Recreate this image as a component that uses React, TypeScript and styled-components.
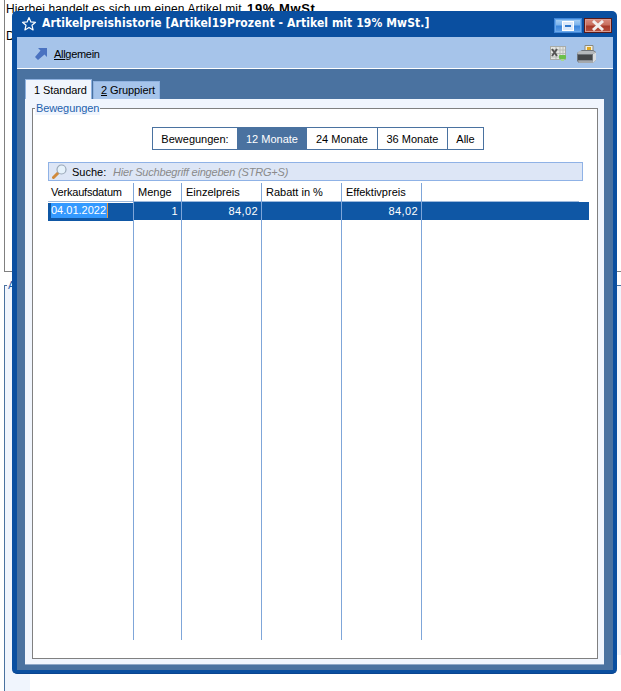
import React from "react";
import styled, { createGlobalStyle } from "styled-components";

const GlobalStyle = createGlobalStyle`
  html, body {
    margin: 0;
    padding: 0;
    background: #fff;
    font-family: "Liberation Sans", Arial, sans-serif;
  }
`;

const Page = styled.div`
  position: relative;
  width: 621px;
  height: 691px;
  overflow: hidden;
  background: #fff;
  display: flex;
  flex-direction: column;
`;

const BackTop = styled.div`
  height: 272px;
  flex: none;
  box-sizing: border-box;
  margin-left: 4px;
  padding: 2px 0 0 1px;
  border-left: 1px solid #808080;
  border-bottom: 1px solid #808080;
  font-size: 12px;
  line-height: 13px;
  letter-spacing: 0.14px;
  color: #000;
`;

const BackLine = styled.div`
  height: 13px;
  margin-bottom: 15px;
  white-space: nowrap;

  b {
    margin-left: 2px;
    font-size: 13px;
    letter-spacing: 0.6px;
  }
`;

const BackBottom = styled.div`
  flex: 1;
  margin-top: 7px;
  margin-left: 4px;
  display: flex;
  flex-direction: column;
`;

const BackFieldset = styled.fieldset`
  height: 376px;
  flex: none;
  box-sizing: border-box;
  margin: 0;
  padding: 0;
  border: none;
  border-top: 1px solid #4a72a0;
  border-left: 1px solid #4a72a0;
  background: #f0f5fd;
`;

const BackLegend = styled.legend`
  margin-left: 2px;
  padding: 0 1px;
  font-size: 11px;
  line-height: 12px;
  color: #1f62ad;
`;

const BackStrip = styled.div`
  flex: 1;
  width: 25px;
  border-left: 1px solid #4a72a0;
  background: #f0f5fd;
`;

const Window = styled.div`
  position: absolute;
  left: 12px;
  top: 11px;
  width: 605px;
  height: 663px;
  box-sizing: border-box;
  padding: 0 4px 3px 5px;
  background: #0a4fa0;
  border-radius: 5px;
  border-bottom: 1px solid #0a4590;
  display: flex;
  flex-direction: column;
  font-family: "Liberation Sans", Arial, sans-serif;
  font-size: 11px;
  color: #000;
`;

const TitleBar = styled.div`
  height: 26px;
  flex: none;
  display: flex;
  align-items: center;
  padding-left: 4px;
`;

const Title = styled.div`
  margin: -2px 0 0 5px;
  color: #fff;
  font-family: "DejaVu Sans Condensed", "DejaVu Sans", sans-serif;
  font-stretch: condensed;
  font-weight: bold;
  font-size: 12px;
  letter-spacing: 0.1px;
  white-space: nowrap;
  flex: 1;
`;

const WindowButton = styled.div<{ $close?: boolean }>`
  width: 28px;
  height: 15px;
  box-sizing: border-box;
  margin-top: 3px;
  margin-right: ${(props) => (props.$close ? "1px" : "2px")};
  display: flex;
  align-items: center;
  justify-content: center;
  border: 1px solid ${(props) => (props.$close ? "#5a1a18" : "#3f86d8")};
  box-shadow: inset 0 0 0 1px ${(props) => (props.$close ? "#d89a90" : "#6aa8ea")};
  background: ${(props) =>
    props.$close
      ? "linear-gradient(#d98a7e 0%, #c8705f 45%, #a83a2a 55%, #b5503e 100%)"
      : "linear-gradient(#a8d0f5 0%, #7db4ec 45%, #3a86dc 55%, #60a0e8 100%)"};
`;

const Toolbar = styled.div`
  height: 32px;
  flex: none;
  box-sizing: border-box;
  display: flex;
  align-items: center;
  padding: 2px 16px 0 18px;
  background: #a6c4ea;
  border-bottom: 1px solid #fff;
`;

const ToolLabel = styled.span`
  margin-left: 7px;
  flex: 1;
  letter-spacing: -0.3px;
`;

const ToolIcons = styled.div`
  display: flex;
  align-items: center;
  gap: 10px;
`;

const Body = styled.div`
  flex: 1;
  min-height: 0;
  display: flex;
  flex-direction: column;
  padding: 10px 9px 5px 8px;
  background: #4a72a0;
`;

const Tabs = styled.div`
  height: 20px;
  flex: none;
  display: flex;
  align-items: flex-end;
  gap: 1px;
`;

const Tab = styled.div<{ $active?: boolean }>`
  box-sizing: border-box;
  width: 67px;
  height: ${(props) => (props.$active ? "20px" : "18px")};
  padding-left: ${(props) => (props.$active ? "8px" : "7px")};
  line-height: ${(props) => (props.$active ? "20px" : "17px")};
  letter-spacing: -0.1px;
  background: ${(props) => (props.$active ? "#f0f5fd" : "#a6c4ea")};
  border: 1px solid #8fb2e0;
  border-bottom: none;
  white-space: nowrap;
`;

const Panel = styled.div`
  flex: 1;
  min-height: 0;
  box-sizing: border-box;
  display: flex;
  padding: 3px 6px 5px 7px;
  background: #f0f5fd;
  border-bottom: 1px solid #8fa8c8;
`;

const Fieldset = styled.fieldset`
  flex: 1;
  min-width: 0;
  margin: 0;
  padding: 0;
  border: 1px solid #808080;
  background: #fff;
`;

const Legend = styled.legend`
  margin-left: 2px;
  padding: 0 1px;
  color: #1f62ad;
  background: #f0f5fd;
  line-height: 13px;
  letter-spacing: -0.1px;
`;

const Segments = styled.div`
  width: 332px;
  height: 23px;
  box-sizing: border-box;
  margin: 12px 0 0 119px;
  display: flex;
  border: 1px solid #4a72a0;
`;

const Segment = styled.div<{ $width: number; $active?: boolean; $plain?: boolean }>`
  box-sizing: border-box;
  width: ${(props) => props.$width}px;
  display: flex;
  align-items: center;
  justify-content: center;
  background: ${(props) => (props.$active ? "#4a72a0" : "#fff")};
  color: ${(props) => (props.$active ? "#fff" : "#000")};
  border-left: ${(props) => (props.$plain ? "none" : "1px solid #4a72a0")};
`;

const SearchBar = styled.div`
  height: 19px;
  width: 535px;
  box-sizing: border-box;
  margin: 12px 0 0 15px;
  padding-left: 3px;
  display: flex;
  align-items: center;
  background: #dde6f6;
  border: 1px solid #8fb2e6;
`;

const SearchLabel = styled.span`
  margin-left: 5px;
  width: 41px;
  flex: none;
`;

const SearchHint = styled.span`
  color: #8a8a8a;
  font-style: italic;
  letter-spacing: -0.2px;
`;

const Grid = styled.div`
  width: 541px;
  height: 457px;
  margin: 2px 0 0 15px;
  display: flex;
`;

const Column = styled.div<{ $width?: number }>`
  box-sizing: border-box;
  flex: ${(props) => (props.$width ? `0 0 ${props.$width}px` : "1")};
  border-right: ${(props) => (props.$width ? "1px solid #7fa6d9" : "none")};
`;

const HeadCell = styled.div<{ $first?: boolean; $short?: boolean }>`
  height: 19px;
  box-sizing: border-box;
  padding-left: ${(props) => (props.$first ? "3px" : "4px")};
  line-height: 18px;
  letter-spacing: ${(props) => (props.$first ? "-0.2px" : "0")};
  border-bottom: 1px solid #9db9dc;
  margin-right: ${(props) => (props.$short ? "10px" : "0")};
  white-space: nowrap;
`;

const DataCell = styled.div`
  height: 18px;
  box-sizing: border-box;
  padding: 0 3px;
  line-height: 19px;
  letter-spacing: 0.4px;
  text-align: right;
  color: #fff;
  background: #0f57a5;
`;

const EditedValue = styled.div`
  width: fit-content;
  padding-right: 1px;
  line-height: 15px;
  margin-top: 1px;
  letter-spacing: 0;
  background: #3399ff;
  border-right: 1px solid #e8963c;
`;

const columns = [
  { title: "Verkaufsdatum", width: 86, value: "" },
  { title: "Menge", width: 48, value: "1" },
  { title: "Einzelpreis", width: 80, value: "84,02" },
  { title: "Rabatt in %", width: 80, value: "" },
  { title: "Effektivpreis", width: 80, value: "84,02" },
];

const StarIcon = () => (
  <svg width="16" height="16" viewBox="0 0 16 16" fill="none">
    <path
      d="M8 1.5l1.9 4.4 4.6.4-3.5 3 1.1 4.6L8 11.4l-4.1 2.5L5 9.3l-3.5-3 4.6-.4z"
      stroke="#fff"
      strokeWidth="1.2"
      strokeLinejoin="round"
    />
  </svg>
);

const RestoreGlyph = () => (
  <svg width="12" height="10" viewBox="0 0 12 10">
    <rect x="0.5" y="0.5" width="11" height="9" fill="#dbe9fa" stroke="#fff" />
    <rect x="3" y="4" width="6" height="2" fill="#2f78cc" />
  </svg>
);

const CloseGlyph = () => (
  <svg width="14" height="11" viewBox="0 0 14 11">
    <path d="M2 1l10 9M12 1L2 10" stroke="#f2eeee" strokeWidth="3" />
  </svg>
);

const ArrowIcon = () => (
  <svg width="12" height="12" viewBox="0 0 12 12">
    <path d="M3 0h9v9L9.5 6.5 3 12 0 9l5.5-6.5z" fill="#4a72c0" />
  </svg>
);

const ExcelIcon = () => (
  <svg width="16" height="15" viewBox="0 0 16 15">
    <rect x="0.5" y="0.5" width="15" height="13" fill="#e4e6e4" stroke="#a8aca8" />
    <path d="M6 1v12M10 1v12M13 1v12M1 4h14M1 7.5h14M1 11h14" stroke="#b8bcb8" strokeWidth="1" />
    <path d="M2 3l5 7M7 3l-5 7" stroke="#555" strokeWidth="2" />
    <rect x="9" y="9" width="7" height="4" rx="1" fill="#6cc04a" />
    <path d="M11 13h3v2h-3z" fill="#a6d890" />
  </svg>
);

const PrinterIcon = () => (
  <svg width="21" height="18" viewBox="0 0 21 18">
    <path d="M9 0.5h8v7H9z" fill="#f4f0e0" stroke="#8a8a80" strokeWidth="1" />
    <rect x="11" y="2" width="4" height="3.5" fill="#e0a820" />
    <path d="M1 8l5-3h11l3 2v8l-3 3H3l-2-2z" fill="#70757a" />
    <path d="M3 6h14l3 1.5-3 1.5H1z" fill="#b4b8bc" />
    <path d="M17 9l3-1.5v7.5l-3 3z" fill="#d8dce0" />
    <path d="M2 10h14v5H2z" fill="#44474a" />
    <path d="M2 15.5h15V18H3z" fill="#a4a8ac" />
  </svg>
);

const MagnifierIcon = () => (
  <svg width="15" height="15" viewBox="0 0 15 15">
    <path d="M1.5 13.5L6 9" stroke="#d08a3c" strokeWidth="3" strokeLinecap="round" />
    <circle cx="9.5" cy="5.5" r="4.5" fill="#e6f2fb" stroke="#9aa8b8" strokeWidth="1.2" />
  </svg>
);

const App = () => (
  <>
    <GlobalStyle />
    <Page>
      <BackTop>
        <BackLine>
          Hierbei handelt es sich um einen Artikel mit <b>19% MwSt.</b>
        </BackLine>
        <BackLine>D</BackLine>
      </BackTop>
      <BackBottom>
        <BackFieldset>
          <BackLegend>A</BackLegend>
        </BackFieldset>
        <BackStrip />
      </BackBottom>

      <Window>
        <TitleBar>
          <StarIcon />
          <Title>Artikelpreishistorie [Artikel19Prozent - Artikel mit 19% MwSt.]</Title>
          <WindowButton>
            <RestoreGlyph />
          </WindowButton>
          <WindowButton $close>
            <CloseGlyph />
          </WindowButton>
        </TitleBar>
        <Toolbar>
          <ArrowIcon />
          <ToolLabel>
            <u>All</u>gemein
          </ToolLabel>
          <ToolIcons>
            <ExcelIcon />
            <PrinterIcon />
          </ToolIcons>
        </Toolbar>
        <Body>
          <Tabs>
            <Tab $active>1 Standard</Tab>
            <Tab>
              <u>2</u> Gruppiert
            </Tab>
          </Tabs>
          <Panel>
            <Fieldset>
              <Legend>Bewegungen</Legend>
              <Segments>
                <Segment $width={84} $plain>
                  Bewegungen:
                </Segment>
                <Segment $width={70} $active $plain>
                  12 Monate
                </Segment>
                <Segment $width={70} $plain>
                  24 Monate
                </Segment>
                <Segment $width={70}>36 Monate</Segment>
                <Segment $width={36}>Alle</Segment>
              </Segments>
              <SearchBar>
                <MagnifierIcon />
                <SearchLabel>Suche:</SearchLabel>
                <SearchHint>Hier Suchbegriff eingeben (STRG+S)</SearchHint>
              </SearchBar>
              <Grid>
                {columns.map((column, index) => (
                  <Column key={column.title} $width={column.width}>
                    <HeadCell $first={index === 0}>{column.title}</HeadCell>
                    <DataCell>
                      {index === 0 ? <EditedValue>04.01.2022</EditedValue> : column.value}
                    </DataCell>
                  </Column>
                ))}
                <Column>
                  <HeadCell $short />
                  <DataCell />
                </Column>
              </Grid>
            </Fieldset>
          </Panel>
        </Body>
      </Window>
    </Page>
  </>
);

export default App;
